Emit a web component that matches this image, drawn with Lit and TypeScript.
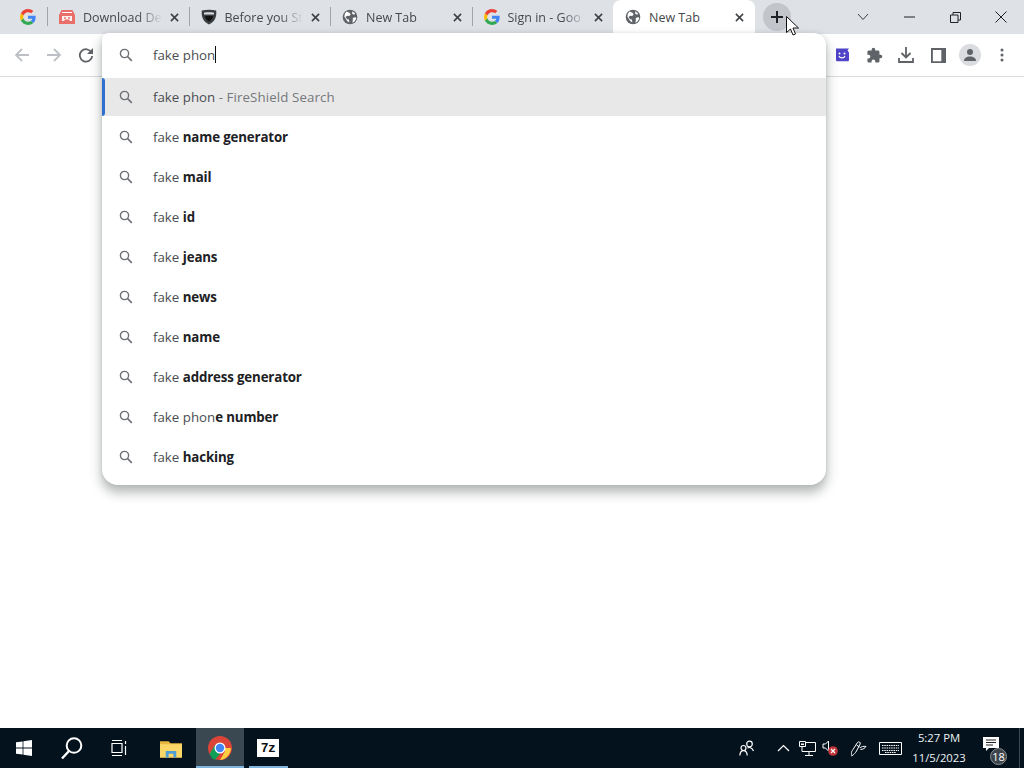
import { LitElement, html, css } from "lit";
import { customElement } from "lit/decorators.js";

const gIcon = html`<svg class="fav" viewBox="0 0 48 48"><path fill="#EA4335" d="M24 9.500c3.500 0 6.700 1.200 9.200 3.600l6.900-6.900C35.900 2.400 30.500 0 24 0 14.600 0 6.500 5.400 2.600 13.200l8 6.200C12.500 13.600 17.800 9.500 24 9.500z"/><path fill="#4285F4" d="M47 24.500c0-1.600-.1-3.100-.4-4.500H24v9h12.900c-.6 3-2.200 5.500-4.700 7.200l7.700 6C44.400 38 47 31.900 47 24.500z"/><path fill="#FBBC05" d="M10.500 28.600c-.5-1.400-.8-3-.8-4.600s.3-3.200.8-4.600l-8-6.200C.9 16.500 0 20.100 0 24s.9 7.500 2.600 10.800l7.900-6.200z"/><path fill="#34A853" d="M24 48c6.500 0 11.900-2.100 15.900-5.800l-7.700-6c-2.100 1.400-4.900 2.300-8.200 2.300-6.200 0-11.500-4.100-13.400-9.900l-8 6.200C6.500 42.600 14.600 48 24 48z"/></svg>`;

const globe = html`<svg class="fav" viewBox="0 0 16 16"><circle cx="8" cy="8" r="7.300" fill="#5f6368"/><path fill="#fff" d="M4.500 2.600l3 1.200 1.200 1.800-1.500 1.400-2-.3-1.700 1.300 1.600 2.300 1.800.2.500 3-2-1.300-3-4.500.4-3zM10.800 9l2.600-1 .9 1.800-2.300 3.300-1.600.6.400-2.400zM10 2.300l3 2-.6 1.400-2-.7z"/></svg>`;

const x = html`<svg class="x" viewBox="0 0 10 10"><path d="M1 1l8 8M9 1l-8 8" stroke="#3c4043" stroke-width="1.700" fill="none"/></svg>`;

const mag = html`<svg class="mag" viewBox="0 0 14 14"><circle cx="5.500" cy="5.500" r="4.100" fill="none" stroke="#6d7074" stroke-width="1.400"/><path d="M8.500 8.500l4.300 4.300" stroke="#6d7074" stroke-width="1.700"/></svg>`;

const shopIcon = html`<svg class="fav" viewBox="0 0 16 16"><path fill="#ea6f6b" d="M2.500 1h11L16 6v9H0V6z"/><path fill="#fff" d="M3 3h10v1H3z"/><path fill="#fff" d="M3 7h10v5h-2l-1-1.500H6L5 12H3z" opacity=".9"/><circle cx="6" cy="9" r="1" fill="#ea6f6b"/><circle cx="10" cy="9" r="1" fill="#ea6f6b"/></svg>`;
const shield = html`<svg class="fav" viewBox="0 0 16 16"><path fill="#3a3e42" d="M.8 1.500C5 .6 11 .6 15.200 1.500c.6 6.500-1.200 11-7.200 14C2 12.500.2 8 .8 1.500z"/><path fill="#d9dbde" d="M3 3.700c3.400-.5 6.600-.5 10 0v1.800H3z"/><path fill="#111" d="M4 7h8c-.3 2.500-1.700 4.200-4 5.600C5.700 11.200 4.300 9.500 4 7z"/></svg>`;

const suggestions: [string, string][] = [
  ["fake ", "name generator"],
  ["fake ", "mail"],
  ["fake ", "id"],
  ["fake ", "jeans"],
  ["fake ", "news"],
  ["fake ", "name"],
  ["fake ", "address generator"],
  ["fake phon", "e number"],
  ["fake ", "hacking"],
];

const tabs = [
  { icon: shopIcon, title: "Download De" },
  { icon: shield, title: "Before you St" },
  { icon: globe, title: "New Tab" },
  { icon: gIcon, title: "Sign in - Goo" },
];

@customElement("app-root")
export class AppRoot extends LitElement {
  static styles = css`
    :host {
      display: flex;
      flex-direction: column;
      position: relative;
      width: 1024px;
      height: 768px;
      overflow: hidden;
      background: #fff;
      font-family: "Open Sans", "Noto Sans", sans-serif;
      color: #202124;
    }
    svg { display: block; flex: none; }
    .strip {
      height: 34px;
      flex: none;
      display: flex;
      align-items: center;
      background: #dee1e6;
    }
    .first {
      width: 48px;
      height: 34px;
      flex: none;
      box-sizing: border-box;
      padding-left: 20px;
      display: flex;
      align-items: center;
      position: relative;
    }
    .first::after, .tab.sep::after {
      content: "";
      position: absolute;
      right: 0;
      top: 7px;
      height: 19px;
      width: 1px;
      background: #a0a3a8;
    }
    .fav { width: 16px; height: 16px; }
    .tab {
      width: 141.500px;
      height: 34px;
      flex: none;
      box-sizing: border-box;
      display: flex;
      align-items: center;
      padding: 0 11px 0 11px;
      font-size: 12.500px;
      color: #45484c;
      position: relative;
    }
    .tab .title {
      margin-left: 8px;
      flex: 1;
      min-width: 0;
      white-space: nowrap;
      overflow: hidden;
      -webkit-mask-image: linear-gradient(90deg, #000 70%, transparent 100%);
      mask-image: linear-gradient(90deg, #000 70%, transparent 100%);
    }
    .tab.active {
      background: #fff;
      border-radius: 8px 8px 0 0;
      margin-left: -1px;
      width: 142px;
      padding-left: 12px;
    }
    .tab.active .title { -webkit-mask-image: none; mask-image: none; }
    .x { width: 9px; height: 9px; margin-left: 8px; }
    .plus {
      width: 28px;
      height: 28px;
      margin-left: 8px;
      border-radius: 50%;
      background: #c2c5ca;
      display: flex;
      align-items: center;
      justify-content: center;
      flex: none;
    }
    .win { margin-left: auto; display: flex; align-items: center; height: 34px; }
    .win div { width: 46px; display: flex; justify-content: center; }
    .toolbar {
      height: 42px;
      flex: none;
      display: flex;
      align-items: center;
      border-bottom: 1px solid #dadce0;
      background: #fff;
      padding-left: 14px;
    }
    .nav { display: flex; gap: 16px; align-items: center; }
    .tools {
      margin-left: auto;
      display: flex;
      align-items: center;
      padding-right: 6px;
    }
    .tool { width: 32px; display: flex; justify-content: center; align-items: center; flex: none; }
    .avatar {
      width: 22px;
      height: 22px;
      border-radius: 50%;
      background: #dadce0;
      display: flex;
      align-items: center;
      justify-content: center;
    }
    .page { flex: 1; background: #fff; }
    .popup {
      position: absolute;
      left: 102px;
      top: 33px;
      width: 724px;
      height: 452px;
      background: #fff;
      border-radius: 6px 12px 16px 16px;
      box-shadow: 0 7px 11px 1px rgba(60, 70, 70, 0.36), 0 0 4px rgba(60, 70, 70, 0.12);
      font-size: 13.300px;
      color: #4a4d51;
    }
    .input {
      height: 44px;
      display: flex;
      align-items: center;
      padding-left: 17px;
      margin-bottom: 1px;
      box-sizing: border-box;
    }
    .mag { width: 14px; height: 14px; margin-right: 20px; flex: none; }
    .caret {
      display: inline-block;
      width: 1px;
      height: 17px;
      background: #111;
      vertical-align: -3px;
    }
    .row {
      height: 40px;
      display: flex;
      align-items: center;
      padding-left: 17px;
      white-space: pre;
    }
    .row b { font-weight: 700; color: #202124; letter-spacing: -0.15px; }
    .row.hl {
      background: #e8e8e8;
      height: 38px;
      margin-top: 1px;
      margin-bottom: 1px;
      position: relative;
    }
    .row.hl::before {
      content: "";
      position: absolute;
      left: 0;
      top: 0;
      bottom: 0;
      width: 3px;
      border-radius: 0 3px 3px 0;
      background: #2f6fd0;
    }
    .row .sub { color: #75787c; letter-spacing: 0.1px; }
    .cursor { position: absolute; left: 786px; top: 16px; }
    .taskbar {
      height: 40px;
      flex: none;
      display: flex;
      align-items: center;
      background: #04121e;
      color: #fff;
    }
    .tb {
      width: 48px;
      height: 40px;
      flex: none;
      display: flex;
      align-items: center;
      justify-content: center;
      box-sizing: border-box;
      position: relative;
    }
    .tb.files { width: 52px; padding-left: 2px; }
    .tb.open::after {
      content: "";
      position: absolute;
      bottom: 0;
      left: 0;
      right: 0;
      height: 2px;
      background: #7fb4dd;
    }
    .tb.zip::after { left: 5px; right: 4px; }
    .tb.cur { background: #3a4852; }
    .sz {
      width: 22px;
      height: 18px;
      background: #fff;
      color: #111;
      font: 700 13px "Liberation Mono", monospace;
      display: flex;
      align-items: center;
      justify-content: center;
      letter-spacing: -0.5px;
    }
    .tray { margin-left: auto; display: flex; align-items: center; height: 40px; }
    .clock {
      width: 62px;
      margin-left: 6px;
      font-size: 11.300px;
      line-height: 20px;
      text-align: center;
      color: #eef2f5;
    }
    .notif {
      position: relative;
      width: 42px;
      height: 40px;
      display: flex;
      align-items: center;
      justify-content: center;
    }
    .notif svg { margin-top: -7px; }
    .badge {
      position: absolute;
      left: 20px;
      top: 20px;
      width: 17px;
      height: 17px;
      border-radius: 50%;
      background: #3d444a;
      border: 1px solid #8a9096;
      box-sizing: border-box;
      font-size: 11px;
      line-height: 15px;
      text-align: center;
      color: #fff;
    }
    .desk { width: 12px; height: 40px; flex: none; box-sizing: border-box; padding-left: 7px; }
    .desk div { width: 1px; height: 40px; background: #3b4751; }
    .ti { width: 24px; display: flex; justify-content: center; flex: none; }
    .ti.up { margin-left: 12px; }
    .ti.vol { margin-left: -1px; }
    .ti.pen { margin-left: 4px; }
    .ti.kb { margin-left: 8px; }
  `;

  render() {
    return html`
      <div class="strip">
        <div class="first">${gIcon}</div>
        ${tabs.map(
          (t, i) => html`<div class="tab ${i < 3 ? "sep" : ""}">${t.icon}<span class="title">${t.title}</span>${x}</div>`
        )}
        <div class="tab active">${globe}<span class="title">New Tab</span>${x}</div>
        <div class="plus">
          <svg width="14" height="14" viewBox="0 0 14 14"><path d="M7 1v12M1 7h12" stroke="#202124" stroke-width="2"/></svg>
        </div>
        <div class="win">
          <div><svg width="12" height="8" viewBox="0 0 12 8"><path d="M1 1l5 5.500L11 1" fill="none" stroke="#3c4043" stroke-width="1"/></svg></div>
          <div><svg width="11" height="2" viewBox="0 0 11 2"><path d="M0 1h11" stroke="#202124" stroke-width="1"/></svg></div>
          <div><svg width="11" height="11" viewBox="0 0 11 11"><path d="M.5 3h7.500v7.500H.5zM3 3V.5h7.500V8H8" fill="none" stroke="#202124"/></svg></div>
          <div><svg width="12" height="12" viewBox="0 0 12 12"><path d="M.5.500l11 11M11.500.5l-11 11" stroke="#202124" stroke-width="1"/></svg></div>
        </div>
      </div>
      <div class="toolbar">
        <div class="nav">
          <svg width="16" height="16" viewBox="0 0 16 16"><path d="M15 8H2M8 2L2 8l6 6" fill="none" stroke="#bdc1c6" stroke-width="1.800"/></svg>
          <svg width="16" height="16" viewBox="0 0 16 16"><path d="M1 8h13M8 2l6 6-6 6" fill="none" stroke="#bdc1c6" stroke-width="1.800"/></svg>
          <svg width="16" height="16" viewBox="0 0 16 16"><path d="M13.500 5.500A6.200 6.200 0 1 0 14.200 9" fill="none" stroke="#5f6368" stroke-width="1.800"/><path d="M15 1v6H9z" fill="#5f6368"/></svg>
        </div>
        <div class="tools">
          <div class="tool"><svg width="16" height="16" viewBox="0 0 16 16"><path d="M2 1.500h13l-1.500 2 1.500 2V13c0 .8-.6 1.300-1.300 1.300H3.300C2.600 14.300 2 13.800 2 13z" fill="#4f43c8"/><path d="M5 9c1 2.500 5 2.500 6 0" fill="none" stroke="#fff" stroke-width="1.200"/><circle cx="5.500" cy="6.500" r="1" fill="#fff"/><circle cx="10.500" cy="6.500" r="1" fill="#fff"/></svg></div>
          <div class="tool"><svg width="17" height="17" viewBox="0 0 24 24"><path fill="#5f6368" d="M20.500 11H19V7a2 2 0 0 0-2-2h-4V3.500a2.500 2.500 0 0 0-5 0V5H4a2 2 0 0 0-2 2v3.800h1.500a2.700 2.700 0 0 1 0 5.400H2V20a2 2 0 0 0 2 2h3.800v-1.500a2.700 2.700 0 0 1 5.400 0V22H17a2 2 0 0 0 2-2v-4h1.500a2.500 2.500 0 0 0 0-5z"/></svg></div>
          <div class="tool"><svg width="16" height="18" viewBox="0 0 16 18"><path d="M8 1v10M3.500 7L8 11.500 12.500 7M1 12v4h14v-4" fill="none" stroke="#5f6368" stroke-width="1.800"/></svg></div>
          <div class="tool"><svg width="15" height="15" viewBox="0 0 16 16"><path d="M1 1h14v14H1z" fill="none" stroke="#5f6368" stroke-width="2"/><path d="M11 1h4v14h-4z" fill="#5f6368"/></svg></div>
          <div class="tool"><div class="avatar">
            <svg width="14" height="14" viewBox="0 0 14 14"><circle cx="7" cy="4" r="3" fill="#5f6368"/><path d="M1 13c0-3 2.500-4.500 6-4.500s6 1.500 6 4.500z" fill="#5f6368"/></svg>
          </div></div>
          <div class="tool"><svg width="4" height="14" viewBox="0 0 4 14"><circle cx="2" cy="2" r="1.500" fill="#5f6368"/><circle cx="2" cy="7" r="1.500" fill="#5f6368"/><circle cx="2" cy="12" r="1.500" fill="#5f6368"/></svg></div>
        </div>
      </div>
      <div class="page"></div>
      <div class="taskbar">
        <div class="tb">
          <svg width="16" height="16" viewBox="0 0 16 16"><path fill="#fff" d="M0 2.300L6.600 1.400v6.200H0zM7.400 1.300L16 0v7.600H7.400zM0 8.400h6.600v6.200L0 13.700zM7.400 8.400H16V16l-8.600-1.200z"/></svg>
        </div>
        <div class="tb">
          <svg width="24" height="24" viewBox="0 0 24 24"><circle cx="14" cy="9.500" r="7.300" fill="none" stroke="#fff" stroke-width="2"/><path d="M9 15L2 22.500" stroke="#fff" stroke-width="2.400"/></svg>
        </div>
        <div class="tb">
          <svg width="18" height="16" viewBox="0 0 18 16"><path d="M1 3.500h10v9H1zM1 .5h10M1 15.500h10M14.500 1v3M14.500 6v9" fill="none" stroke="#fff" stroke-width="1.200"/></svg>
        </div>
        <div class="tb files">
          <svg width="22" height="19" viewBox="0 0 23 19"><path d="M0 2h9l2 2h12v15H0z" fill="#e7b73f"/><path d="M0 5h23v14H0z" fill="#fbd767"/><path d="M6 12h11v7h-3v-4H9v4H6z" fill="#4d9fd6"/></svg>
        </div>
        <div class="tb open cur">
          <svg width="24" height="24" viewBox="0 0 24 24"><circle cx="12" cy="12" r="12" fill="#db4437"/><path d="M1.600 18l5.200-9 5.200 9-5.200 6C4.700 23 2.800 20.800 1.600 18z" fill="#0f9d58"/><path d="M12 24l5.200-9-5.200-3h11c-.3 6.600-5.400 12-11 12z" fill="#ffcd40"/><circle cx="12" cy="12" r="5.500" fill="#fff"/><circle cx="12" cy="12" r="4.200" fill="#4285f4"/></svg>
        </div>
        <div class="tb open zip"><div class="sz">7z</div></div>
        <div class="tray">
          <div class="ti"><svg width="16" height="16" viewBox="0 0 16 16"><circle cx="10.500" cy="4" r="2.800" fill="none" stroke="#fff" stroke-width="1.200"/><circle cx="4.500" cy="8" r="2.500" fill="none" stroke="#fff" stroke-width="1.200"/><path d="M.8 15.500c.3-3 2-4.800 3.700-4.800S8 12.500 8.300 15.500M8.500 8c1.500-.8 4.500-1 6 3" fill="none" stroke="#fff" stroke-width="1.200"/></svg></div>
          <div class="ti up"><svg width="13" height="8" viewBox="0 0 13 8"><path d="M1 7l5.500-5.500L12 7" fill="none" stroke="#fff" stroke-width="1.200"/></svg></div>
          <div class="ti"><svg width="17" height="15" viewBox="0 0 17 15"><path d="M.5.500h6v5h-6zM6.500 1.500h10v9H3V5.500M10 10.500v3.500M6 14.500h8" fill="none" stroke="#fff"/><path d="M2 2.500h3v1.500H2z" fill="#fff"/></svg></div>
          <div class="ti vol"><svg width="16" height="16" viewBox="0 0 16 16"><path d="M1 4h2.500L6.500 1v10L3.500 8H1z" fill="none" stroke="#fff"/><circle cx="11" cy="11" r="4.800" fill="#c0353a"/><path d="M9 9l4 4M13 9l-4 4" stroke="#fff" stroke-width="1.200"/></svg></div>
          <div class="ti pen"><svg width="17" height="18" viewBox="0 0 17 18"><path d="M2.500 16.500c-2-1.800-1-4 .5-6l4.500-7c1.300-1.300 3.300-.3 2.700 1.500L6.500 12c-1 1.800-2.800 3.600-4 4.500zM10 9c1.500-1.500 3.500-2 6-1.500-1 1.500-3 3-5.500 3M6.500 6l3 2M1 17c.5-.5 1-.5 1.500-.5" fill="none" stroke="#fff"/></svg></div>
          <div class="ti kb"><svg width="23" height="13" viewBox="0 0 23 13"><path d="M.5.500h22v12H.5z" fill="none" stroke="#fff"/><path d="M3 3.500h17M3 6h17M3 8.500h17M6 10.500h11" stroke="#fff" stroke-dasharray="1.500 .8"/></svg></div>
          <div class="clock">5:27 PM<br />11/5/2023</div>
          <div class="notif">
            <svg width="16" height="15" viewBox="0 0 16 15"><path d="M0 0h16v11H6l-3 3v-3H0z" fill="#fff"/><path d="M3 3h10M3 5.500h10M3 8h7" stroke="#222"/></svg>
            <div class="badge">18</div>
          </div>
          <div class="desk"><div></div></div>
        </div>
      </div>
      <div class="popup">
        <div class="input">${mag}<span>fake phon<span class="caret"></span></span></div>
        <div class="row hl">${mag}<span>fake phon <span class="sub">- FireShield Search</span></span></div>
        ${suggestions.map(([a, b]) => html`<div class="row">${mag}<span>${a}<b>${b}</b></span></div>`)}
      </div>
      <svg class="cursor" width="13" height="20" viewBox="0 0 13 20"><path d="M.5.500v16l4-3.500 2.500 6 2.500-1-2.500-6h5.500z" fill="#fff" stroke="#111" stroke-width="1"/></svg>
    `;
  }
}
